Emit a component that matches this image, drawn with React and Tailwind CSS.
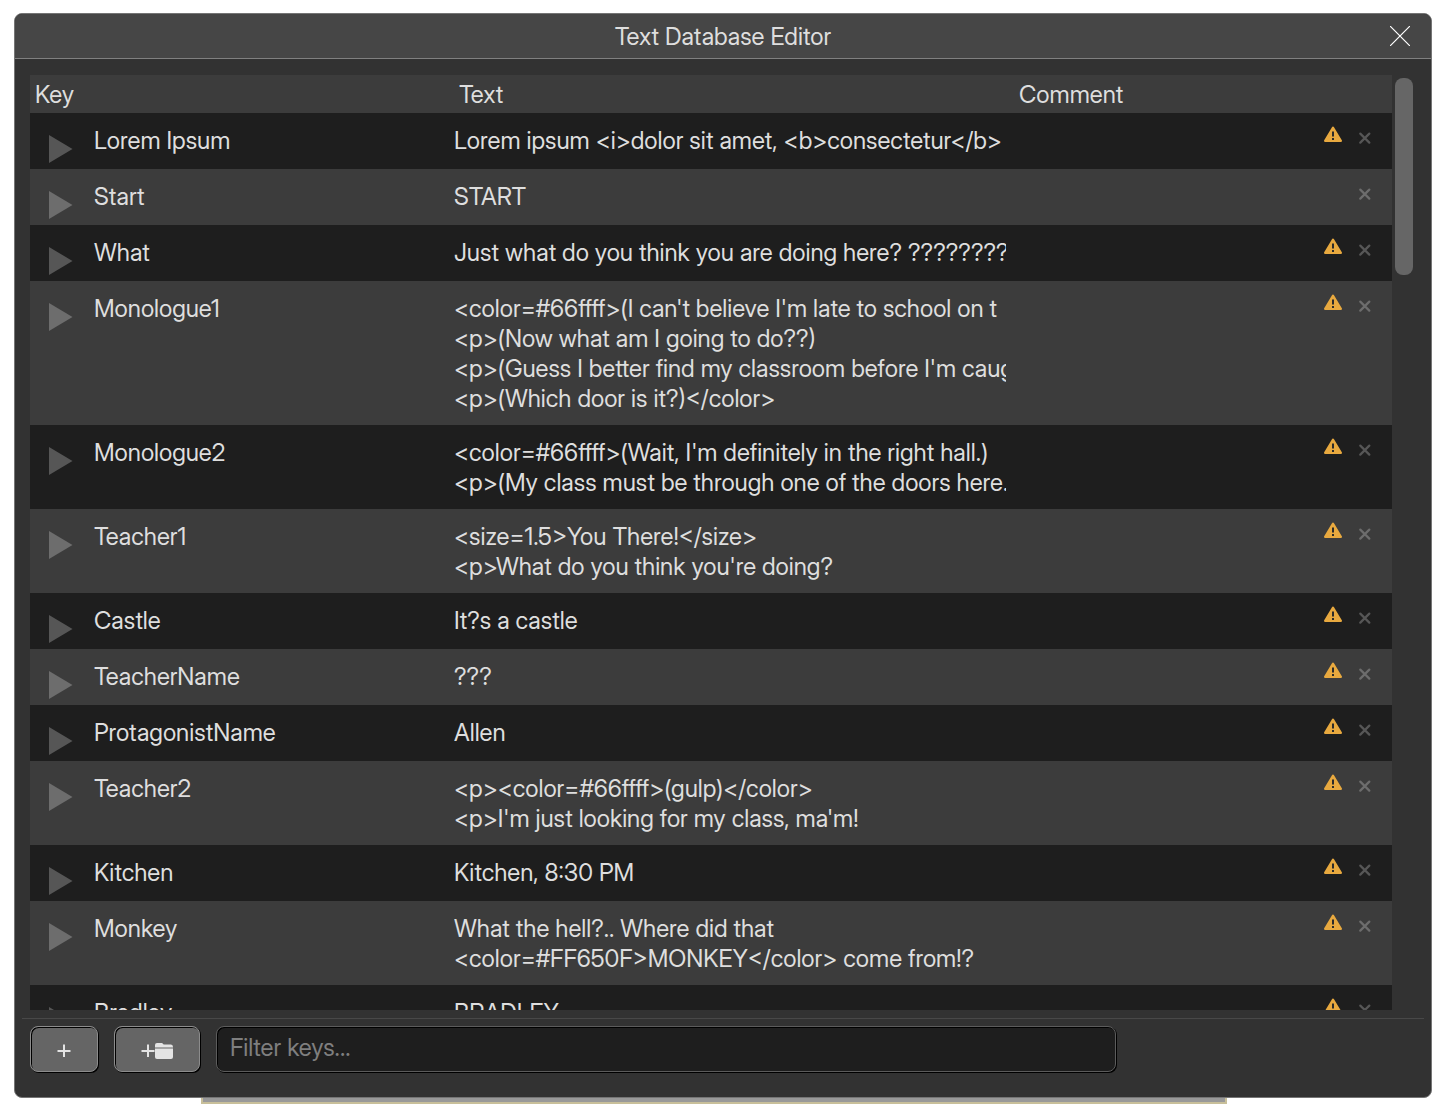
import React, { useState } from 'react'

const entries = [
  { key: 'Lorem Ipsum', text: 'Lorem ipsum <i>dolor sit amet, <b>consectetur</b>', warn: true },
  { key: 'Start', text: 'START', warn: false },
  { key: 'What', text: 'Just what do you think you are doing here? ?????????', warn: true },
  {
    key: 'Monologue1',
    text: "<color=#66ffff>(I can't believe I'm late to school on t\n<p>(Now what am I going to do??)\n<p>(Guess I better find my classroom before I'm caug\n<p>(Which door is it?)</color>",
    warn: true
  },
  {
    key: 'Monologue2',
    text: "<color=#66ffff>(Wait, I'm definitely in the right hall.)\n<p>(My class must be through one of the doors here.",
    warn: true
  },
  { key: 'Teacher1', text: "<size=1.5>You There!</size>\n<p>What do you think you're doing?", warn: true },
  { key: 'Castle', text: 'It?s a castle', warn: true },
  { key: 'TeacherName', text: '???', warn: true },
  { key: 'ProtagonistName', text: 'Allen', warn: true },
  { key: 'Teacher2', text: "<p><color=#66ffff>(gulp)</color>\n<p>I'm just looking for my class, ma'm!", warn: true },
  { key: 'Kitchen', text: 'Kitchen, 8:30 PM', warn: true },
  { key: 'Monkey', text: 'What the hell?.. Where did that\n<color=#FF650F>MONKEY</color> come from!?', warn: true },
  { key: 'Bradley', text: 'BRADLEY', warn: true }
]

const PlayIcon = () => (
  <svg width="24" height="28" viewBox="0 0 24 28" fill="currentColor">
    <path d="M0 0 L23.5 14 L0 28 Z" />
  </svg>
)

const WarningIcon = () => (
  <svg width="18" height="17" viewBox="0 0 18 17" role="img" aria-label="Warning">
    <path d="M9 1.8 L16.8 14.8 H1.2 Z" fill="#e8a93f" stroke="#e8a93f" strokeWidth="2.4" strokeLinejoin="round" />
    <path d="M8 5.5 h2 v5 h-2 Z M8 12 h2 v2 h-2 Z" fill="#2b2b2b" />
  </svg>
)

const DeleteIcon = () => (
  <svg width="12" height="12" viewBox="0 0 12 12" fill="none" stroke="currentColor" strokeWidth="2.2" strokeLinecap="round">
    <path d="M1.3 1.6 L10.3 10.6 M10.3 1.6 L1.3 10.6" />
  </svg>
)

const CloseIcon = () => (
  <svg width="20" height="20" viewBox="0 0 20 20" fill="none" stroke="#fff" strokeWidth="1.2">
    <path d="M0 0 L20 20 M20 0 L0 20" />
  </svg>
)

const PlusIcon = () => (
  <svg width="14" height="14" viewBox="0 0 14 14" fill="none" stroke="#e4e4e4" strokeWidth="2">
    <path d="M7 0.5 V13 M0.5 7 H13.5" />
  </svg>
)

const FolderIcon = () => (
  <svg width="18" height="16" viewBox="0 0 18 16" fill="#e4e4e4">
    <path d="M0 4.5 V2 Q0 0 2 0 H6.5 Q7.5 0 8.2 1 L8.6 1.5 H16 Q18 1.5 18 4 V4.5 Z" />
    <path d="M0 5.5 H18 V14 Q18 16 16 16 H2 Q0 16 0 14 Z" />
  </svg>
)

const App = () => {
  const [filter, setFilter] = useState('')
  const [rows, setRows] = useState(entries)

  const visible = rows.filter((row) => row.key.toLowerCase().includes(filter.toLowerCase()))

  const handleDelete = (key) => {
    setRows(rows.filter((row) => row.key !== key))
  }

  const handleAdd = () => {
    setRows([...rows, { key: 'Key' + rows.length, text: '', warn: false }])
  }

  return (
    <div className="h-screen flex flex-col bg-white pl-[14px] pr-3 pt-[13px] pb-[6px] font-['Inter_Display','Inter',sans-serif] text-[24px] leading-[30px] text-[#dedede]">
      {/* Window */}
      <div className="flex-1 min-h-0 flex flex-col bg-[#323232] border border-[#757575] rounded-lg overflow-hidden">
        <div className="h-[45px] shrink-0 grid grid-cols-[1fr_auto_1fr] items-center bg-[#464646] border-b border-[#808080] px-[21px]">
          <h1 className="col-start-2 pt-0.5">Text Database Editor</h1>
          <button aria-label="Close" className="justify-self-end">
            <CloseIcon />
          </button>
        </div>

        {/* Entries */}
        <div className="flex-1 min-h-0 flex pt-4 pl-[15px] pr-[18px] gap-[3px]">
          <div className="flex-1 overflow-hidden">
            <table className="w-full table-fixed">
              <colgroup>
                <col className="w-[424px]" />
                <col className="w-[560px]" />
                <col />
                <col className="w-[104px]" />
              </colgroup>
              <thead className="bg-[#3c3c3c] text-left">
                <tr className="h-[38px]">
                  <th className="font-normal pt-0.5 pl-[5px]">Key</th>
                  <th className="font-normal pt-0.5 pl-[5px]">Text</th>
                  <th className="font-normal pt-0.5 pl-[5px]">Comment</th>
                  <th></th>
                </tr>
              </thead>
              <tbody>
                {visible.map((row) => (
                  <tr key={row.key} className="h-14 align-top bg-[#3c3c3c] odd:bg-[#1e1e1e]">
                    <td>
                      <div className="flex items-start pl-[19px]">
                        <button aria-label={'Expand ' + row.key} className="w-[45px] pt-[22px] text-white/25">
                          <PlayIcon />
                        </button>
                        <span className="pt-[13px]">{row.key}</span>
                      </div>
                    </td>
                    <td className="pt-[13px] pb-[11px] pr-2">
                      <div className="whitespace-pre overflow-hidden">{row.text}</div>
                    </td>
                    <td></td>
                    <td>
                      <div className="flex justify-end items-start gap-[17px] pr-[21px]">
                        {row.warn && (
                          <span className="pt-[13px]">
                            <WarningIcon />
                          </span>
                        )}
                        <button aria-label={'Delete ' + row.key} onClick={() => handleDelete(row.key)} className="pt-[19px] text-white/25">
                          <DeleteIcon />
                        </button>
                      </div>
                    </td>
                  </tr>
                ))}
              </tbody>
            </table>
          </div>
          <div className="w-[18px] pt-[3px]">
            <div className="h-[197px] rounded-lg bg-[#666]"></div>
          </div>
        </div>

        {/* Toolbar */}
        <div className="mt-2 mx-[7px] px-2 pt-[7px] pb-[25px] flex gap-4 border-t border-[#484848]">
          <button
            aria-label="Add entry"
            onClick={handleAdd}
            className="w-[68px] h-[46px] flex items-center justify-center pt-1 rounded-lg bg-[#656565] border border-[#8c8c8c] shadow-[1px_1px_0_#000,inset_1px_1px_0_#000]"
          >
            <PlusIcon />
          </button>
          <button
            aria-label="Add folder"
            className="w-[86px] h-[46px] flex items-center justify-center pt-1 rounded-lg bg-[#656565] border border-[#8c8c8c] shadow-[1px_1px_0_#000,inset_1px_1px_0_#000]"
          >
            <PlusIcon />
            <FolderIcon />
          </button>
          <input
            type="text"
            aria-label="Filter keys"
            placeholder="Filter keys..."
            value={filter}
            onChange={(e) => setFilter(e.target.value)}
            className="w-[900px] h-[46px] pl-[13px] pb-1 rounded-lg bg-[#1e1e1e] border border-[#5c5c5c] shadow-[1px_1px_0_#000,inset_1px_1px_0_#000] placeholder:text-[#7f7f7f] outline-none"
          />
        </div>
      </div>

      {/* Panel behind the window */}
      <div className="h-[6px] shrink-0 ml-[187px] mr-[205px] bg-[#999] border-2 border-t-0 border-[#c8bf9a]"></div>
    </div>
  )
}

export default App
